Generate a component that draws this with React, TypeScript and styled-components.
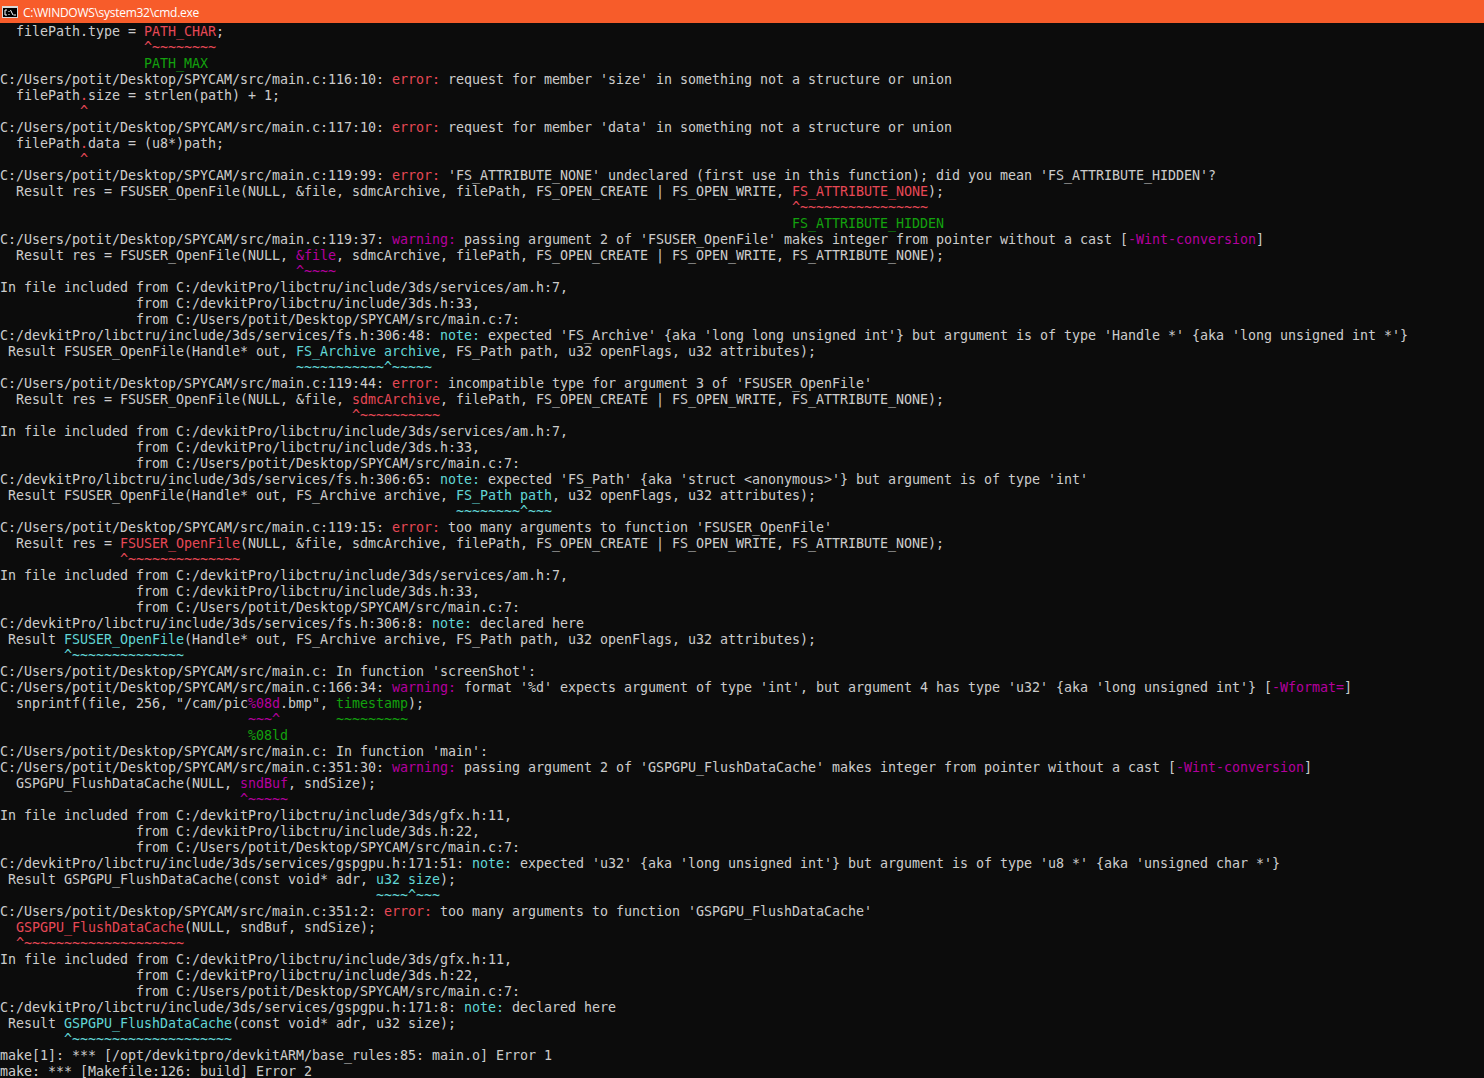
import React from "react";
import styled, { createGlobalStyle } from "styled-components";

const COLORS = { r: "#e74856", g: "#13a10e", m: "#b4009e", c: "#61d6d6" } as const;
type Tone = keyof typeof COLORS;
type Seg = string | [Tone, string];
type Line = Seg[];

const Global = createGlobalStyle`
  html, body { margin: 0; padding: 0; background: #0c0c0c; overflow: hidden; }
`;

const Window = styled.div`
  display: flex;
  flex-direction: column;
  width: 1484px;
  height: 1078px;
  background: #0c0c0c;
  overflow: hidden;
`;

const TitleBar = styled.header`
  display: flex;
  flex: none;
  align-items: center;
  gap: 5px;
  height: 23px;
  padding-left: 2px;
  background: #f75c2a;
  color: #fff;
  font: 12px/23px "Open Sans", "Noto Sans", sans-serif;
`;

const TitleText = styled.span`
  padding-top: 1px;
  letter-spacing: -0.28px;
`;

const Console = styled.main`
  flex: 1;
  min-height: 0;
  padding-top: 1px;
  overflow: hidden;
`;

const Row = styled.div`
  height: 16px;
  color: #cccccc;
  font: 13.33px/16px "DejaVu Sans Mono", monospace;
  letter-spacing: -0.025px;
  white-space: pre;
`;

const Tinted = styled.span<{ $tone: Tone }>`
  color: ${(p) => COLORS[p.$tone]};
`;

const sp = (n: number) => " ".repeat(n);
const main = "C:/Users/potit/Desktop/SPYCAM/src/main.c";
const inc = "C:/devkitPro/libctru/include/3ds";
const from = sp(17) + "from ";
const open = (a: Seg, b: Seg, c: Seg, d: Seg): Line => ["  Result res = ", a, "(NULL, ", b, ", ", c, ", filePath, FS_OPEN_CREATE | FS_OPEN_WRITE, ", d, ");"];
const decl = (a: Seg, b: Seg, c: Seg): Line => [" Result ", a, "(Handle* out, ", b, ", ", c, ", u32 openFlags, u32 attributes);"];
const includedAm: Line[] = [
  ["In file included from " + inc + "/services/am.h:7,"],
  [from + inc + ".h:33,"],
  [from + main + ":7:"],
];
const includedGfx: Line[] = [
  ["In file included from " + inc + "/gfx.h:11,"],
  [from + inc + ".h:22,"],
  [from + main + ":7:"],
];

const LINES: Line[] = [
  ["  filePath.type = ", ["r", "PATH_CHAR"], ";"],
  [sp(18), ["r", "^~~~~~~~~"]],
  [sp(18), ["g", "PATH_MAX"]],
  [main + ":116:10: ", ["r", "error: "], "request for member 'size' in something not a structure or union"],
  ["  filePath", ["r", "."], "size = strlen(path) + 1;"],
  [sp(10), ["r", "^"]],
  [main + ":117:10: ", ["r", "error: "], "request for member 'data' in something not a structure or union"],
  ["  filePath", ["r", "."], "data = (u8*)path;"],
  [sp(10), ["r", "^"]],
  [main + ":119:99: ", ["r", "error: "], "'FS_ATTRIBUTE_NONE' undeclared (first use in this function); did you mean 'FS_ATTRIBUTE_HIDDEN'?"],
  open("FSUSER_OpenFile", "&file", "sdmcArchive", ["r", "FS_ATTRIBUTE_NONE"]),
  [sp(99), ["r", "^~~~~~~~~~~~~~~~~"]],
  [sp(99), ["g", "FS_ATTRIBUTE_HIDDEN"]],
  [main + ":119:37: ", ["m", "warning: "], "passing argument 2 of 'FSUSER_OpenFile' makes integer from pointer without a cast [", ["m", "-Wint-conversion"], "]"],
  open("FSUSER_OpenFile", ["m", "&file"], "sdmcArchive", "FS_ATTRIBUTE_NONE"),
  [sp(37), ["m", "^~~~~"]],
  ...includedAm,
  [inc + "/services/fs.h:306:48: ", ["c", "note: "], "expected 'FS_Archive' {aka 'long long unsigned int'} but argument is of type 'Handle *' {aka 'long unsigned int *'}"],
  decl("FSUSER_OpenFile", ["c", "FS_Archive archive"], "FS_Path path"),
  [sp(37), ["c", "~~~~~~~~~~~^~~~~~"]],
  [main + ":119:44: ", ["r", "error: "], "incompatible type for argument 3 of 'FSUSER_OpenFile'"],
  open("FSUSER_OpenFile", "&file", ["r", "sdmcArchive"], "FS_ATTRIBUTE_NONE"),
  [sp(44), ["r", "^~~~~~~~~~~"]],
  ...includedAm,
  [inc + "/services/fs.h:306:65: ", ["c", "note: "], "expected 'FS_Path' {aka 'struct <anonymous>'} but argument is of type 'int'"],
  decl("FSUSER_OpenFile", "FS_Archive archive", ["c", "FS_Path path"]),
  [sp(57), ["c", "~~~~~~~~^~~~"]],
  [main + ":119:15: ", ["r", "error: "], "too many arguments to function 'FSUSER_OpenFile'"],
  open(["r", "FSUSER_OpenFile"], "&file", "sdmcArchive", "FS_ATTRIBUTE_NONE"),
  [sp(15), ["r", "^~~~~~~~~~~~~~~"]],
  ...includedAm,
  [inc + "/services/fs.h:306:8: ", ["c", "note: "], "declared here"],
  decl(["c", "FSUSER_OpenFile"], "FS_Archive archive", "FS_Path path"),
  [sp(8), ["c", "^~~~~~~~~~~~~~~"]],
  [main + ": In function 'screenShot':"],
  [main + ":166:34: ", ["m", "warning: "], "format '%d' expects argument of type 'int', but argument 4 has type 'u32' {aka 'long unsigned int'} [", ["m", "-Wformat="], "]"],
  ['  snprintf(file, 256, "/cam/pic', ["m", "%08d"], '.bmp", ', ["g", "timestamp"], ");"],
  [sp(31), ["m", "~~~^"], sp(7), ["g", "~~~~~~~~~"]],
  [sp(31), ["g", "%08ld"]],
  [main + ": In function 'main':"],
  [main + ":351:30: ", ["m", "warning: "], "passing argument 2 of 'GSPGPU_FlushDataCache' makes integer from pointer without a cast [", ["m", "-Wint-conversion"], "]"],
  ["  GSPGPU_FlushDataCache(NULL, ", ["m", "sndBuf"], ", sndSize);"],
  [sp(30), ["m", "^~~~~~"]],
  ...includedGfx,
  [inc + "/services/gspgpu.h:171:51: ", ["c", "note: "], "expected 'u32' {aka 'long unsigned int'} but argument is of type 'u8 *' {aka 'unsigned char *'}"],
  [" Result GSPGPU_FlushDataCache(const void* adr, ", ["c", "u32 size"], ");"],
  [sp(47), ["c", "~~~~^~~~"]],
  [main + ":351:2: ", ["r", "error: "], "too many arguments to function 'GSPGPU_FlushDataCache'"],
  ["  ", ["r", "GSPGPU_FlushDataCache"], "(NULL, sndBuf, sndSize);"],
  [sp(2), ["r", "^~~~~~~~~~~~~~~~~~~~~"]],
  ...includedGfx,
  [inc + "/services/gspgpu.h:171:8: ", ["c", "note: "], "declared here"],
  [" Result ", ["c", "GSPGPU_FlushDataCache"], "(const void* adr, u32 size);"],
  [sp(8), ["c", "^~~~~~~~~~~~~~~~~~~~~"]],
  ["make[1]: *** [/opt/devkitpro/devkitARM/base_rules:85: main.o] Error 1"],
  ["make: *** [Makefile:126: build] Error 2"],
];

const CmdIcon = () => (
  <svg width="16" height="16" viewBox="0 0 16 16" aria-hidden="true">
    <rect x="0" y="2" width="16" height="12" fill="#d8d8d8" />
    <rect x="1" y="4" width="14" height="9" fill="#000" />
    <path d="M5 6H3V11H5M7 7V8M7 10V11M8.5 6L11 11M11.5 11H14" fill="none" stroke="#fff" strokeWidth="1" />
  </svg>
);

export default function App() {
  return (
    <Window>
      <Global />
      <TitleBar>
        <CmdIcon />
        <TitleText>C:\WINDOWS\system32\cmd.exe</TitleText>
      </TitleBar>
      <Console>
        {LINES.map((line, i) => (
          <Row key={i}>
            {line.map((seg, j) =>
              typeof seg === "string" ? seg : <Tinted key={j} $tone={seg[0]}>{seg[1]}</Tinted>
            )}
          </Row>
        ))}
      </Console>
    </Window>
  );
}
